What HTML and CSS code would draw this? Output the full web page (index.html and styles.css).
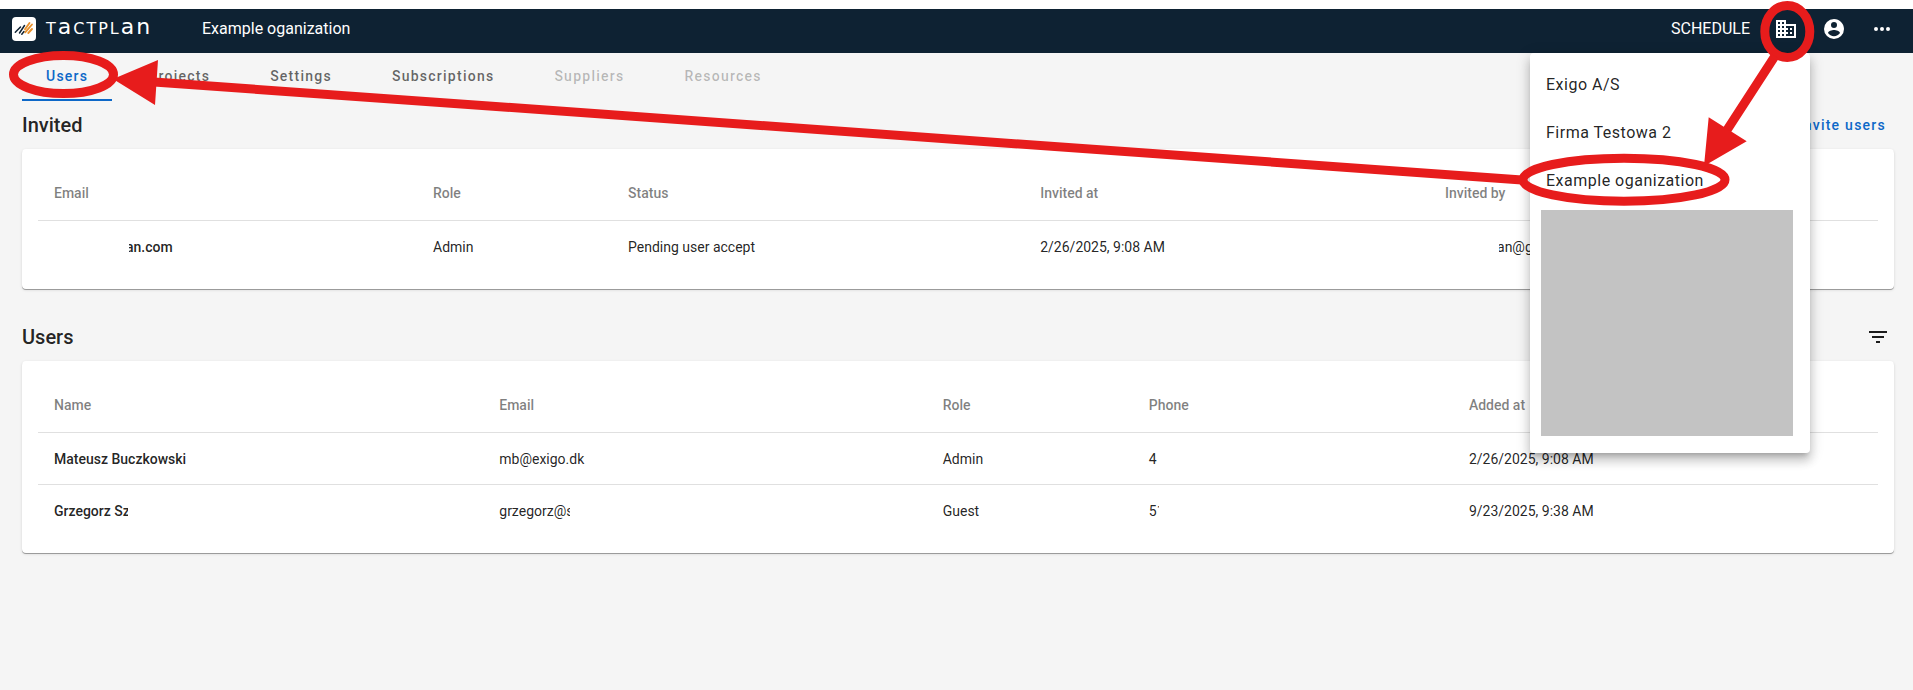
FILE: index.html
```html
<!DOCTYPE html>
<html lang="en">
<head>
<meta charset="utf-8">
<title>Tactplan</title>
<link rel="stylesheet" href="styles.css">
</head>
<body>
<header class="topbar">
  <svg class="logo" viewBox="0 0 24 24" aria-hidden="true">
    <rect width="24" height="24" rx="4" fill="#fff"/>
    <g fill="none" stroke-linecap="round" stroke-linejoin="round">
      <path stroke="#0e2233" stroke-width="1.5" d="M3.3 15.300L8.500 10M7.500 16L12.500 8.500M9.800 17.200L12 14.500"/>
      <path stroke="#e8912d" stroke-width="1.9" d="M13 12.300L17.500 6M13.200 15.300L20 7.500M16.300 16L20 12"/>
    </g>
  </svg>
  <span class="wordmark">T<span class="low">a</span>CTPL<span class="low">an</span></span>
  <span class="org">Example oganization</span>
  <nav class="actions">
    <a class="schedule" href="#">SCHEDULE</a>
    <button class="icon-btn" type="button" aria-label="Organizations"><svg viewBox="0 0 24 24"><path d="M12 7V3H2v18h20V7H12zM6 19H4v-2h2v2zm0-4H4v-2h2v2zm0-4H4V9h2v2zm0-4H4V5h2v2zm4 12H8v-2h2v2zm0-4H8v-2h2v2zm0-4H8V9h2v2zm0-4H8V5h2v2zm10 12h-8v-2h2v-2h-2v-2h2v-2h-2V9h8v10zm-2-8h-2v2h2v-2zm0 4h-2v2h2v-2z"/></svg></button>
    <button class="icon-btn" type="button" aria-label="Account"><svg viewBox="0 0 24 24"><path d="M12,19.2C9.5,19.2 7.29,17.92 6,16C6.03,14 10,12.9 12,12.9C14,12.9 17.97,14 18,16C16.71,17.92 14.5,19.2 12,19.2M12,5A3,3 0 0,1 15,8A3,3 0 0,1 12,11A3,3 0 0,1 9,8A3,3 0 0,1 12,5M12,2A10,10 0 0,0 2,12A10,10 0 0,0 12,22A10,10 0 0,0 22,12C22,6.47 17.5,2 12,2Z"/></svg></button>
    <button class="icon-btn" type="button" aria-label="More"><svg viewBox="0 0 24 24"><path d="M16,12A2,2 0 0,1 18,10A2,2 0 0,1 20,12A2,2 0 0,1 18,14A2,2 0 0,1 16,12M10,12A2,2 0 0,1 12,10A2,2 0 0,1 14,12A2,2 0 0,1 12,14A2,2 0 0,1 10,12M4,12A2,2 0 0,1 6,10A2,2 0 0,1 8,12A2,2 0 0,1 6,14A2,2 0 0,1 4,12Z"/></svg></button>
  </nav>
  <div class="menu">
    <button class="menu-item" type="button">Exigo A/S</button>
    <button class="menu-item" type="button">Firma Testowa 2</button>
    <button class="menu-item" type="button">Example oganization</button>
    <div class="masked"></div>
  </div>
</header>

<main class="page">
  <nav class="tabs">
    <button class="tab active" type="button">Users</button>
    <button class="tab" type="button">Projects</button>
    <button class="tab" type="button">Settings</button>
    <button class="tab" type="button">Subscriptions</button>
    <button class="tab" type="button" disabled>Suppliers</button>
    <button class="tab" type="button" disabled>Resources</button>
  </nav>

  <section>
    <div class="section-head">
      <h2>Invited</h2>
      <button class="link-btn" type="button">Invite users</button>
    </div>
    <div class="card">
      <table class="grid invited">
        <colgroup><col class="email"><col class="role"><col class="status"><col class="date"><col></colgroup>
        <thead><tr><th>Email</th><th>Role</th><th>Status</th><th>Invited at</th><th>Invited by</th></tr></thead>
        <tbody>
          <tr>
            <td class="strong"><span class="cut cut-address"><span>an.com</span></span></td>
            <td>Admin</td><td>Pending user accept</td><td>2/26/2025, 9:08 AM</td>
            <td><span class="cut cut-inviter"><span>an@g</span></span></td>
          </tr>
        </tbody>
      </table>
    </div>
  </section>

  <section>
    <div class="section-head users-head">
      <h2>Users</h2>
      <button class="icon-btn dark" type="button" aria-label="Filter"><svg viewBox="0 0 24 24"><path d="M6,13H18V11H6M3,6V8H21V6M10,18H14V16H10V18Z"/></svg></button>
    </div>
    <div class="card">
      <table class="grid users">
        <colgroup><col class="name"><col class="email"><col class="role"><col class="phone"><col></colgroup>
        <thead><tr><th>Name</th><th>Email</th><th>Role</th><th>Phone</th><th>Added at</th></tr></thead>
        <tbody>
          <tr><td class="strong">Mateusz Buczkowski</td><td>mb@exigo.dk</td><td>Admin</td><td>4</td><td>2/26/2025, 9:08 AM</td></tr>
          <tr><td class="strong"><span class="cut cut-name">Grzegorz Sz</span></td><td><span class="cut cut-mail">grzegorz@s</span></td><td>Guest</td><td><span class="cut cut-phone">51</span></td><td>9/23/2025, 9:38 AM</td></tr>
        </tbody>
      </table>
    </div>
  </section>
</main>

<svg class="marks" viewBox="0 0 1913 690" aria-hidden="true">
  <g fill="none" stroke="#e71c1c" stroke-width="9">
    <ellipse cx="63.500" cy="74.500" rx="50" ry="19"/>
    <ellipse cx="1787.300" cy="31.500" rx="22.500" ry="26"/>
    <ellipse cx="1624" cy="179.700" rx="101" ry="21.500"/>
    <path d="M1775 56L1727 130M1522 180L154 82"/>
  </g>
  <path fill="#e71c1c" d="M1708.700 117.300L1746.700 141.300L1704 166ZM158 60L155 105L113 79Z"/>
</svg>
</body>
</html>
```
FILE: styles.css
```css
* { box-sizing: border-box; }

body {
  margin: 0;
  padding-top: 9px;
  min-height: 100vh;
  font-family: Roboto, "Liberation Sans", sans-serif;
  font-size: 14px;
  color: rgba(0, 0, 0, .87);
  background: linear-gradient(#fff 9px, #f5f5f5 9px);
}

button {
  font: inherit;
  color: inherit;
  background: none;
  border: 0;
  padding: 0;
}

/* Top bar */
.topbar {
  position: relative;
  display: flex;
  align-items: flex-start;
  height: 44px;
  padding: 8px 19px 0 12px;
  background: #0e2233;
  color: #fff;
  font-size: 16px;
  line-height: 24px;
}

.logo { width: 24px; height: 24px; }

.wordmark {
  width: 156px;
  margin-left: 10px;
  font-family: "DejaVu Sans", sans-serif;
  letter-spacing: 2px;
}

.wordmark .low { font-size: 22px; line-height: 16px; }

.actions {
  display: flex;
  gap: 24px;
  margin-left: auto;
}

.schedule { color: inherit; text-decoration: none; }

.icon-btn { width: 24px; height: 24px; }

.icon-btn svg {
  display: block;
  width: 24px;
  height: 24px;
  fill: #fff;
}

.icon-btn.dark svg { fill: #1c1c1c; }

/* Organization menu */
.menu {
  position: absolute;
  top: 100%;
  right: 103px;
  z-index: 2;
  display: flex;
  flex-direction: column;
  width: 280px;
  padding: 8px 0 17px;
  border-radius: 4px;
  background: #fff;
  color: rgba(0, 0, 0, .87);
  box-shadow: 0 5px 5px -3px rgba(0, 0, 0, .2), 0 8px 10px 1px rgba(0, 0, 0, .14), 0 3px 14px 2px rgba(0, 0, 0, .12);
}

.menu-item {
  height: 48px;
  padding: 0 16px;
  text-align: left;
  letter-spacing: .5px;
}

.masked {
  height: 226px;
  margin: 5px 17px 0 11px;
  background: #c3c3c3;
}

/* Page */
.page { padding: 0 19px 0 22px; }

.tabs { display: flex; gap: 12px; }

.tab {
  height: 48px;
  padding: 0 24px;
  border-bottom: 2px solid transparent;
  font-weight: 500;
  letter-spacing: 1.25px;
  color: rgba(0, 0, 0, .6);
}

.tab.active { color: #0d68c8; border-color: #0d68c8; }

.tab:disabled { color: rgba(0, 0, 0, .26); }

.section-head {
  display: flex;
  align-items: center;
  justify-content: space-between;
  height: 48px;
}

.users-head { margin-top: 24px; }

h2 {
  margin: 0;
  font-size: 20px;
  font-weight: 500;
  line-height: 32px;
}

.link-btn {
  padding-right: 8px;
  font-weight: 500;
  letter-spacing: 1.25px;
  color: #0d68c8;
}

.users-head .icon-btn { margin-right: 4px; }

.card {
  padding: 16px;
  border-radius: 4px;
  background: #fff;
  box-shadow: 0 1px 0 rgba(0, 0, 0, .3), 0 1px 3px rgba(0, 0, 0, .14);
}

/* Tables */
.grid {
  width: 100%;
  table-layout: fixed;
  border-spacing: 0;
}

.grid th, .grid td {
  height: 52px;
  padding: 0 16px;
  text-align: left;
  white-space: nowrap;
}

.grid th {
  height: 56px;
  font-weight: 500;
  color: rgba(0, 0, 0, .5);
  border-bottom: 1px solid #e0e0e0;
}

.grid tbody tr:not(:last-child) td { border-bottom: 1px solid #e0e0e0; }

.grid .strong { font-weight: 500; }

.invited .email { width: 20.6%; }
.invited .role { width: 10.6%; }
.invited .status { width: 22.4%; }
.invited .date { width: 22%; }

.users .name { width: 24.2%; }
.users .email { width: 24.1%; }
.users .role { width: 11.2%; }
.users .phone { width: 17.4%; }

/* Values that are only partly visible */
.cut {
  display: block;
  overflow: hidden;
}

.cut-address { margin-left: 75px; }
.cut-address span { margin-left: -3px; }
.cut-inviter { margin-left: 54px; }
.cut-inviter span { margin-left: -2px; }
.cut-name { width: 74px; }
.cut-mail { width: 71px; }
.cut-phone { width: 10px; }

/* Hand-drawn marks over the page */
.marks {
  position: absolute;
  top: 0;
  left: 0;
  z-index: 3;
  width: 100%;
  pointer-events: none;
}
```
